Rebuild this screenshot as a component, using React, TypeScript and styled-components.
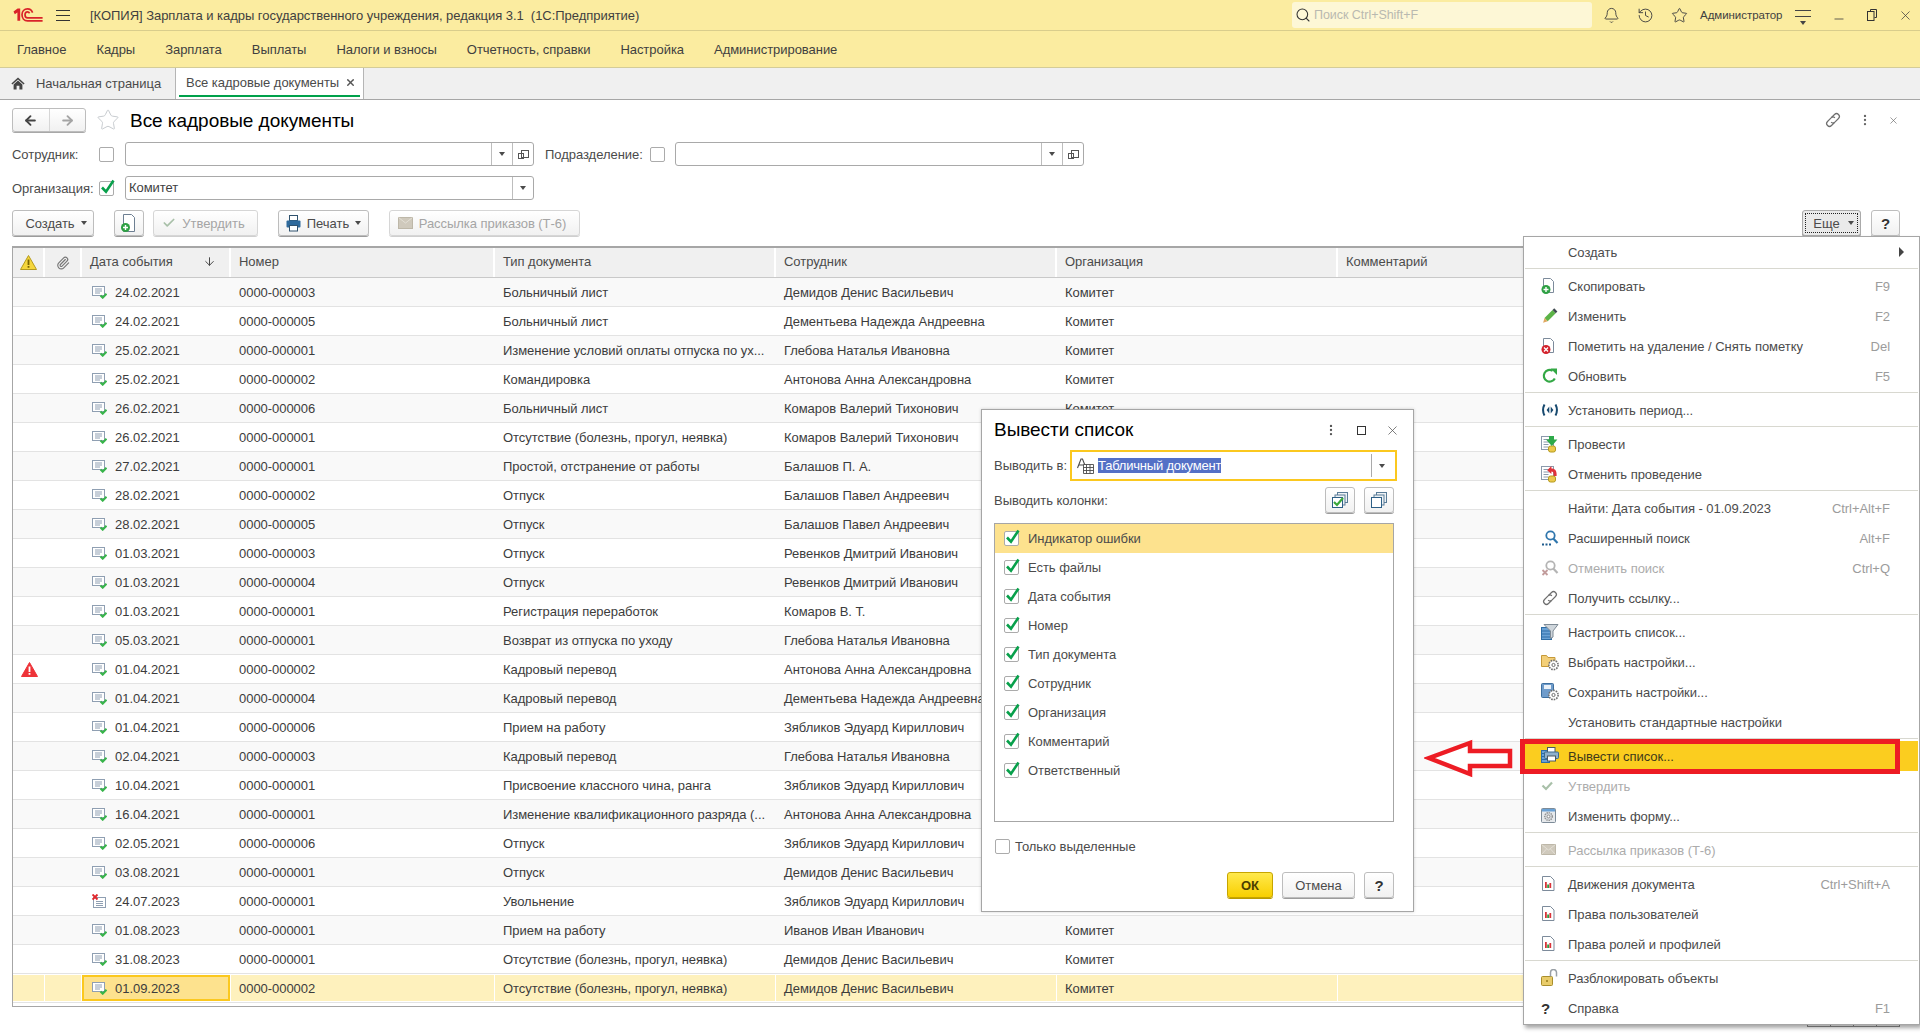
import React from "react";
import styled, { createGlobalStyle } from "styled-components";
import { Bell, History, Star, Search, X, Minus, MoreVertical, ArrowLeft, ArrowRight, ArrowDown, Paperclip, Check } from "lucide-react";

const GlobalStyle = createGlobalStyle`
	html, body {
		margin: 0;
		padding: 0;
		background: #fff;
	}
	body {
		font-family: "Liberation Sans", Arial, sans-serif;
		font-size: 13px;
		letter-spacing: -0.04px;
		color: #4b4b4b;
		overflow: hidden;
	}
	* { box-sizing: border-box; }
`;

/* ---------- data ---------- */

const MENU = ["Главное", "Кадры", "Зарплата", "Выплаты", "Налоги и взносы", "Отчетность, справки", "Настройка", "Администрирование"];

type DocRow = [string, string, string, string, string?];

const DEMIDOV = "Демидов Денис Васильевич";
const DEMENT = "Дементьева Надежда Андреевна";
const GLEBOVA = "Глебова Наталья Ивановна";
const ANTON = "Антонова Анна Александровна";
const KOMAROV = "Комаров Валерий Тихонович";
const BALASH = "Балашов Павел Андреевич";
const REVENK = "Ревенков Дмитрий Иванович";
const ZYAB = "Зябликов Эдуард Кириллович";
const ABSENT = "Отсутствие (болезнь, прогул, неявка)";

const ROWS: DocRow[] = [
	["24.02.2021", "0000-000003", "Больничный лист", DEMIDOV],
	["24.02.2021", "0000-000005", "Больничный лист", DEMENT],
	["25.02.2021", "0000-000001", "Изменение условий оплаты отпуска по ух...", GLEBOVA],
	["25.02.2021", "0000-000002", "Командировка", ANTON],
	["26.02.2021", "0000-000006", "Больничный лист", KOMAROV],
	["26.02.2021", "0000-000001", ABSENT, KOMAROV],
	["27.02.2021", "0000-000001", "Простой, отстранение от работы", "Балашов П. А."],
	["28.02.2021", "0000-000002", "Отпуск", BALASH],
	["28.02.2021", "0000-000005", "Отпуск", BALASH],
	["01.03.2021", "0000-000003", "Отпуск", REVENK],
	["01.03.2021", "0000-000004", "Отпуск", REVENK],
	["01.03.2021", "0000-000001", "Регистрация переработок", "Комаров В. Т."],
	["05.03.2021", "0000-000001", "Возврат из отпуска по уходу", GLEBOVA],
	["01.04.2021", "0000-000002", "Кадровый перевод", ANTON, "warn"],
	["01.04.2021", "0000-000004", "Кадровый перевод", DEMENT],
	["01.04.2021", "0000-000006", "Прием на работу", ZYAB],
	["02.04.2021", "0000-000003", "Кадровый перевод", GLEBOVA],
	["10.04.2021", "0000-000001", "Присвоение классного чина, ранга", ZYAB],
	["16.04.2021", "0000-000001", "Изменение квалификационного разряда (...", ANTON],
	["02.05.2021", "0000-000006", "Отпуск", ZYAB],
	["03.08.2021", "0000-000001", "Отпуск", DEMIDOV],
	["24.07.2023", "0000-000001", "Увольнение", ZYAB, "deleted"],
	["01.08.2023", "0000-000001", "Прием на работу", "Иванов Иван Иванович"],
	["31.08.2023", "0000-000001", ABSENT, DEMIDOV],
	["01.09.2023", "0000-000002", ABSENT, DEMIDOV, "selected"],
];

const COLUMNS = ["Индикатор ошибки", "Есть файлы", "Дата события", "Номер", "Тип документа", "Сотрудник", "Организация", "Комментарий", "Ответственный"];

type MenuEntry = { icon?: string; label: string; key?: string; disabled?: boolean; arrow?: boolean; active?: boolean } | "sep";

const MORE_MENU: MenuEntry[] = [
	{ label: "Создать", arrow: true },
	"sep",
	{ icon: "docAdd", label: "Скопировать", key: "F9" },
	{ icon: "pencil", label: "Изменить", key: "F2" },
	{ icon: "docDel", label: "Пометить на удаление / Снять пометку", key: "Del" },
	{ icon: "refresh", label: "Обновить", key: "F5" },
	"sep",
	{ icon: "period", label: "Установить период..." },
	"sep",
	{ icon: "post", label: "Провести" },
	{ icon: "unpost", label: "Отменить проведение" },
	"sep",
	{ label: "Найти: Дата события - 01.09.2023", key: "Ctrl+Alt+F" },
	{ icon: "find", label: "Расширенный поиск", key: "Alt+F" },
	{ icon: "findOff", label: "Отменить поиск", key: "Ctrl+Q", disabled: true },
	{ icon: "link", label: "Получить ссылку..." },
	"sep",
	{ icon: "funnel", label: "Настроить список..." },
	{ icon: "folderGear", label: "Выбрать настройки..." },
	{ icon: "diskGear", label: "Сохранить настройки..." },
	{ label: "Установить стандартные настройки" },
	"sep",
	{ icon: "printer", label: "Вывести список...", active: true },
	{ icon: "tick", label: "Утвердить", disabled: true },
	{ icon: "formGear", label: "Изменить форму..." },
	"sep",
	{ icon: "mail", label: "Рассылка приказов (Т-6)", disabled: true },
	"sep",
	{ icon: "chart", label: "Движения документа", key: "Ctrl+Shift+A" },
	{ icon: "chart", label: "Права пользователей" },
	{ icon: "chart", label: "Права ролей и профилей" },
	"sep",
	{ icon: "lock", label: "Разблокировать объекты" },
	{ icon: "help", label: "Справка", key: "F1" },
];

/* ---------- drawn icons ---------- */

const Logo = () => (
	<svg width="30" height="15" viewBox="0 0 30 15" fill="none">
		<path d="M0.5 3.6 L4.6 0.6 H7.2 V12.8 H4.4 V4.4 L1.8 6.2Z" fill="#d9232a" />
		<path d="M19.6 4.6 C18.6 2 16.6 0.9 14.6 0.9 C11.2 0.9 9 3.4 9 6.8 C9 10.2 11.2 12.9 14.6 12.9 H29.6" stroke="#d9232a" strokeWidth="1.7" />
		<path d="M16.6 5.2 C16 4.2 15.4 3.8 14.6 3.8 C13 3.8 12 5.1 12 6.8 C12 8.5 13 9.9 14.6 9.9 H29.6" stroke="#d9232a" strokeWidth="1.7" />
	</svg>
);

const HomeIcon = () => (
	<svg width="14" height="13" viewBox="0 0 14 13">
		<path d="M7 0.5 L13.6 6.6 L12.6 7.6 L7 2.6 L1.4 7.6 L0.4 6.6Z" fill="#444" />
		<path d="M2.6 7.4 L7 3.5 L11.4 7.4 V12.6 H8.4 V8.8 H5.6 V12.6 H2.6Z" fill="#444" />
	</svg>
);

const RestoreIcon = () => (
	<svg width="10" height="12" viewBox="0 0 10 12" fill="none" stroke="#333">
		<path d="M3.5 2.5V0.5h6v8h-2" />
		<rect x="0.5" y="2.5" width="6.5" height="9" />
	</svg>
);

const DocStatus = ({ deleted }: { deleted?: boolean }) =>
	deleted ? (
		<svg width="15" height="15" viewBox="0 0 15 15" fill="none">
			<rect x="1.5" y="3.5" width="12" height="10" fill="#fff" stroke="#8f9fb2" />
			<path d="M4 7.5h7M4 9.5h7M4 11.5h7" stroke="#8f9fb2" />
			<path d="M0.5 0.5l5 5M5.5 0.5l-5 5" stroke="#e0262c" strokeWidth="1.9" />
		</svg>
	) : (
		<svg width="15" height="13" viewBox="0 0 15 13" fill="none">
			<rect x="0.5" y="0.5" width="12" height="9" fill="#fff" stroke="#8f9fb2" />
			<path d="M3 3h7M3 5h7M3 7h5" stroke="#8f9fb2" />
			<path d="M8.5 9.5l2.2 2.2 3.8-4" stroke="#38b44a" strokeWidth="2" />
		</svg>
	);

const WarnIcon = ({ color = "#ee3338", mark = "#fff" }: { color?: string; mark?: string }) => (
	<svg width="17" height="15" viewBox="0 0 17 15">
		<path d="M8.5 0.5 L16.5 14.5 H0.5Z" fill={color} stroke={color === "#ee3338" ? color : "#b59a1e"} strokeLinejoin="round" />
		<path d="M7.6 4.5h1.8v5.4H7.6zM7.6 11h1.8v1.8H7.6z" fill={mark} />
	</svg>
);

const GreenCheck = () => (
	<svg width="17" height="16" viewBox="0 0 17 16" fill="none">
		<path d="M3 8.5l4 4.2L14.5 1.5" stroke="#08a04b" strokeWidth="2.6" />
	</svg>
);

const PageGlyph = () => (
	<path d="M2.5 1.5h7l3 3v11h-10z" fill="#fff" stroke="#7d8b9b" />
);

const LinkIcon = () => (
	<svg width="18" height="18" viewBox="0 0 18 18" fill="none" stroke="#6f6f6f" strokeWidth="1.2">
		<path d="M7.5 6.5l3-3a2.7 2.7 0 0 1 4 4l-3.6 3.6a2.7 2.7 0 0 1-3.8 0" />
		<path d="M10.5 11.5l-3 3a2.7 2.7 0 0 1-4-4l3.6-3.6a2.7 2.7 0 0 1 3.8 0" />
	</svg>
);

const MenuGlyph = ({ name }: { name: string }) => {
	const gear = (cx: number, cy: number) => (
		<g>
			<circle cx={cx} cy={cy} r="4.6" fill="#fff" stroke="#6f6f6f" strokeWidth="1.6" strokeDasharray="1.6 1" />
			<circle cx={cx} cy={cy} r="1.6" fill="#fff" stroke="#6f6f6f" />
		</g>
	);
	switch (name) {
		case "docAdd":
			return (
				<svg width="18" height="18" viewBox="0 0 18 18" fill="none">
					<PageGlyph />
					<circle cx="5" cy="12.5" r="4.5" fill="#2ea043" />
					<path d="M5 10v5M2.5 12.5h5" stroke="#fff" strokeWidth="1.4" />
				</svg>
			);
		case "pencil":
			return (
				<svg width="18" height="18" viewBox="0 0 18 18" fill="none">
					<path d="M3.5 11l8-8 3.2 3.2-8 8z" fill="#5cb347" />
					<path d="M11.5 3l1.7-1.7 3.2 3.2-1.7 1.7z" fill="#3f4a4f" />
					<path d="M3.5 11l3.2 3.2-4.6 1.6z" fill="#e0a860" />
				</svg>
			);
		case "docDel":
			return (
				<svg width="18" height="18" viewBox="0 0 18 18" fill="none">
					<PageGlyph />
					<circle cx="5" cy="12.5" r="4.5" fill="#d3222c" />
					<path d="M3 10.5l4 4M7 10.5l-4 4" stroke="#fff" strokeWidth="1.3" />
				</svg>
			);
		case "refresh":
			return (
				<svg width="18" height="18" viewBox="0 0 18 18" fill="none">
					<path d="M13.8 11.4A5.8 5.8 0 1 1 11.6 3.8" stroke="#33a845" strokeWidth="2.2" />
					<path d="M9.6 1.6h6.4v6.4z" fill="#33a845" />
				</svg>
			);
		case "period":
			return (
				<svg width="18" height="18" viewBox="0 0 18 18" fill="none">
					<path d="M3.5 3.5Q0.6 9 3.5 14.5M14.5 3.5Q17.4 9 14.5 14.5" stroke="#17496f" strokeWidth="2" />
					<path d="M8.3 5.5v7L5.6 9zM9.7 5.5v7L12.4 9z" fill="#17496f" />
				</svg>
			);
		case "post":
		case "unpost":
			return (
				<svg width="18" height="18" viewBox="0 0 18 18" fill="none">
					<rect x="0.5" y="1.5" width="12" height="13" fill="#fff" stroke="#8b9aac" />
					<path d="M2.5 4.5h8M2.5 7h6M2.5 9.5h5M2.5 12h5" stroke="#8b9aac" />
					<rect x="7.5" y="11" width="7" height="6" rx="2" fill="#ecc94b" stroke="#b59a1e" />
					{name === "post" ? (
						<path d="M8 1h5v3.4h3.4L10.8 11 5 4.4h3z" fill="#2eaa4a" />
					) : (
						<path d="M6.2 5.2 L10.4 1v2.6c3 0 5.2 1.8 5.2 5.4v2h-3v-2c0-1.6-1-2.4-2.2-2.4v2.4z" fill="#e0333a" />
					)}
				</svg>
			);
		case "find":
		case "findOff": {
			const c = name === "find" ? "#2f76ad" : "#b4b4b4";
			return (
				<svg width="18" height="18" viewBox="0 0 18 18" fill="none">
					<circle cx="9.5" cy="6.5" r="4.2" stroke={c} strokeWidth="1.8" fill="#fff" />
					<path d="M12.5 9.8l4 4.2" stroke={c} strokeWidth="2.2" />
					{name === "find" ? (
						<path d="M1 15.5h2M4.5 15.5h2M8 15.5h2" stroke="#1f5c8e" strokeWidth="2" />
					) : (
						<path d="M1.5 11l5 5M6.5 11l-5 5" stroke="#c29c9c" strokeWidth="1.8" />
					)}
				</svg>
			);
		}
		case "link":
			return <LinkIcon />;
		case "funnel":
			return (
				<svg width="18" height="18" viewBox="0 0 18 18" fill="none">
					<rect x="0.5" y="4.5" width="10" height="12" fill="#6aa2d6" stroke="#2d6da6" />
					<path d="M1 8h9M1 11h9M1 14h9" stroke="#2d6da6" />
					<path d="M3 1.5h14l-5 6.5v6l-2.5 1.5V8z" fill="#cfd6dc" stroke="#7f8b96" />
				</svg>
			);
		case "folderGear":
			return (
				<svg width="18" height="18" viewBox="0 0 18 18" fill="none">
					<path d="M0.5 2.5h5l1.5 2h7v9h-13.5z" fill="#f3cf78" stroke="#c69a3a" />
					{gear(12.5, 12)}
				</svg>
			);
		case "diskGear":
			return (
				<svg width="18" height="18" viewBox="0 0 18 18" fill="none">
					<rect x="0.5" y="0.5" width="12" height="14" rx="1" fill="#6f9ccb" stroke="#3d6f9f" />
					<rect x="3" y="2" width="7" height="4" fill="#eaf1f8" />
					{gear(12.5, 12)}
				</svg>
			);
		case "printer":
			return (
				<svg width="18" height="18" viewBox="0 0 18 18" fill="none">
					<rect x="0.5" y="3.5" width="8" height="12" fill="#6aa2d6" stroke="#2d6da6" />
					<path d="M1 6.5h7M1 9.5h7M1 12.5h7" stroke="#2d6da6" />
					<rect x="6.5" y="0.5" width="7.5" height="5" fill="#fff" stroke="#4a5863" />
					<rect x="3.5" y="5" width="14" height="6.5" rx="1" fill="#8eb0cc" stroke="#3f6a8c" />
					<rect x="6.5" y="9" width="8" height="5" fill="#fff" stroke="#4a5863" />
				</svg>
			);
		case "tick":
			return (
				<svg width="18" height="18" viewBox="0 0 18 18" fill="none">
					<path d="M1.5 8.5l3.5 3.5 6-6.5" stroke="#a9c0a9" strokeWidth="2.2" />
				</svg>
			);
		case "formGear":
			return (
				<svg width="18" height="18" viewBox="0 0 18 18" fill="none">
					<rect x="0.5" y="1.5" width="14" height="14" rx="1" fill="#e6e9ec" stroke="#7d8b98" />
					<rect x="1" y="2" width="13" height="2.5" fill="#6aa2d6" />
					<circle cx="7.5" cy="9.5" r="3.8" fill="#d4d8dc" stroke="#8e8e8e" strokeWidth="1.3" strokeDasharray="1.4 .8" />
					<circle cx="7.5" cy="9.5" r="1.4" fill="#fff" stroke="#8e8e8e" />
				</svg>
			);
		case "mail":
			return (
				<svg width="18" height="18" viewBox="0 0 18 18" fill="none">
					<rect x="0.5" y="3.5" width="14" height="10" fill="#cfc9bc" stroke="#bdb7a8" />
					<path d="M0.5 3.5l7 5.5 7-5.5M0.5 13.5l5-5.5M14.5 13.5l-5-5.5" stroke="#e3dfd5" />
				</svg>
			);
		case "chart":
			return (
				<svg width="18" height="18" viewBox="0 0 18 18" fill="none">
					<path d="M1.5 1.5h8l3.5 3.5v10.500h-11.500z" fill="#fff" stroke="#7d8b9b" />
					<rect x="4" y="7" width="1.800" height="6" fill="#d9333a" />
					<rect x="6.200" y="9.500" width="1.800" height="3.500" fill="#2ea043" />
					<rect x="8.400" y="8" width="1.800" height="5" fill="#d9333a" />
				</svg>
			);
		case "lock":
			return (
				<svg width="18" height="18" viewBox="0 0 18 18" fill="none">
					<rect x="0.5" y="7.5" width="11" height="9" rx="1" fill="#e9cc6a" stroke="#a98e2c" />
					<rect x="5" y="11" width="2" height="2" fill="#a98e2c" />
					<path d="M9.5 7.5V3.5a3 3 0 0 1 6 0v4" stroke="#9aa0a6" strokeWidth="1.5" />
				</svg>
			);
		case "help":
			return <HelpGlyph>?</HelpGlyph>;
		default:
			return null;
	}
};

const AddDocIcon = () => (
	<svg width="16" height="22" viewBox="0 0 16 22" fill="none">
		<path d="M2.5 2.5h8l3 3v14h-11z" fill="#fff" stroke="#6d7f92" />
		<circle cx="4.5" cy="15.5" r="4.5" fill="#2ea043" />
		<path d="M4.5 13v5M2 15.5h5" stroke="#fff" strokeWidth="1.4" />
	</svg>
);

const PrinterIcon = () => (
	<svg width="15" height="17" viewBox="0 0 15 17" fill="none">
		<rect x="3.5" y="0.5" width="8" height="5" fill="#fff" stroke="#30526e" />
		<rect x="0.5" y="5.5" width="14" height="7" rx="1" fill="#2f6a9c" />
		<rect x="3.5" y="10.5" width="8" height="5.5" fill="#fff" stroke="#30526e" />
	</svg>
);

const MailIcon = () => (
	<svg width="15" height="12" viewBox="0 0 15 12" fill="none">
		<rect x="0.5" y="0.5" width="14" height="11" fill="#cfc9bc" stroke="#bdb7a8" />
		<path d="M0.5 0.5l7 5.5 7-5.5" stroke="#e3dfd5" />
	</svg>
);

const SpreadsheetIcon = () => (
	<svg width="17" height="16" viewBox="0 0 17 16" fill="none">
		<path d="M0.5 10L4 1h1.5L9 10M2 7h5" stroke="#4b4b4b" strokeWidth="1.1" />
		<path d="M6.5 6.5h10v9h-10zM6.5 9.5h10M6.5 12.5h10M9.5 6.5v9M13 6.5v9" stroke="#4b4b4b" strokeWidth=".9" fill="#fff" />
	</svg>
);

const CheckAllIcon = ({ checked }: { checked?: boolean }) => (
	<svg width="16" height="16" viewBox="0 0 16 16" fill="none">
		<rect x="5.5" y="0.5" width="10" height="10" fill="#eef2f5" stroke="#5a7c98" />
		<rect x="3" y="3" width="10" height="10" fill="#eef2f5" stroke="#5a7c98" />
		<rect x="0.5" y="5.5" width="10" height="10" fill="#fff" stroke="#2d5f86" />
		{checked && <path d="M2 10l3 3 6-7" stroke="#3aa83a" strokeWidth="2.2" />}
	</svg>
);

/* ---------- window chrome ---------- */

const Page = styled.div`
	position: relative;
	width: 1920px;
	height: 1035px;
	overflow: hidden;
	display: flex;
	flex-direction: column;
`;

const TitleBar = styled.div`
	height: 31px;
	background: #fbeca0;
	border-bottom: 1px solid #d9cd8c;
	display: flex;
	align-items: center;
	color: #3f3f3f;
	flex: none;
`;

const LogoBox = styled.div`
	margin-left: 13px;
	width: 43px;
	display: flex;
`;

const Burger = styled.div`
	width: 14px;
	height: 11px;
	border-top: 1px solid #333;
	border-bottom: 1px solid #333;
	position: relative;
	margin-right: 20px;
	&::after {
		content: "";
		position: absolute;
		left: 0;
		right: 0;
		top: 4px;
		height: 1px;
		background: #333;
	}
`;

const WindowTitle = styled.div`
	white-space: pre;
	width: 1202px;
	flex: none;
`;

const SearchBox = styled.div`
	width: 300px;
	height: 26px;
	background: #fdf7d6;
	border-radius: 3px;
	display: flex;
	align-items: center;
	gap: 3px;
	padding-left: 3px;
	color: #b9b9b0;
	font-size: 12.5px;
	flex: none;
`;

const TitleTools = styled.div`
	display: flex;
	align-items: center;
	margin-left: 2px;
	flex: 1;
	color: #3f3f3f;
`;

const ToolSlot = styled.div<{ $w: number; $gap?: number }>`
	width: ${({ $w }) => $w}px;
	margin-left: ${({ $gap = 0 }) => $gap}px;
	display: flex;
	justify-content: center;
	align-items: center;
	flex: none;
`;

const UserName = styled.div`
	font-size: 11.5px;
	width: 90px;
	flex: none;
	margin-left: 4px;
`;

const SectionLines = styled.div`
	width: 16px;
	height: 11px;
	border-top: 1px solid #444;
	position: relative;
	margin: 0 20px 0 5px;
	flex: none;
	&::before {
		content: "";
		position: absolute;
		left: 0;
		right: 0;
		top: 5px;
		height: 1px;
		background: #444;
	}
	&::after {
		content: "";
		position: absolute;
		left: 5px;
		top: 10px;
		border: 3px solid transparent;
		border-top: 4px solid #444;
	}
`;

const MenuBar = styled.div`
	height: 37px;
	background: #fbeca0;
	border-bottom: 1px solid #d4cc98;
	display: flex;
	align-items: center;
	padding-left: 17px;
	gap: 30px;
	color: #3f3f3f;
	flex: none;
`;

const TabStrip = styled.div`
	height: 32px;
	background: #f0f0f0;
	border-bottom: 1px solid #a6a6a6;
	display: flex;
	flex: none;
`;

const HomeTab = styled.div`
	width: 175px;
	display: flex;
	align-items: center;
	gap: 11px;
	padding-left: 11px;
`;

const ActiveTab = styled.div`
	width: 189px;
	height: 31px;
	background: #fff;
	border-left: 1px solid #b5b5b5;
	border-right: 1px solid #b5b5b5;
	padding: 0 3px;
	flex: none;
`;

const ActiveTabInner = styled.div`
	height: 29px;
	border-bottom: 2px solid #00a14b;
	display: flex;
	align-items: center;
	justify-content: space-between;
	padding: 2px 4px 0 7px;
`;

/* ---------- form ---------- */

const Content = styled.div`
	flex: 1;
	display: flex;
	flex-direction: column;
	padding: 8px 0 0 12px;
	min-height: 0;
`;

const HeadRow = styled.div`
	height: 24px;
	display: flex;
	align-items: center;
	flex: none;
`;

const NavGroup = styled.div`
	width: 74px;
	height: 24px;
	border: 1px solid #bdbdbd;
	border-radius: 3px;
	background: linear-gradient(#fff, #f1f1f1);
	box-shadow: 0 1px 0 #a8a8a8;
	display: flex;
	flex: none;
`;

const NavPart = styled.div<{ $last?: boolean }>`
	flex: 1;
	display: flex;
	align-items: center;
	justify-content: center;
	border-left: ${({ $last }) => ($last ? "1px solid #d6d6d6" : "none")};
`;

const FormTitle = styled.div`
	font-size: 19px;
	color: #000;
	margin-left: 10px;
	padding-top: 2px;
`;

const HeadTools = styled.div`
	margin-left: auto;
	display: flex;
	align-items: center;
	gap: 16px;
	padding-right: 21px;
	color: #666;
`;

const FilterRow = styled.div`
	height: 24px;
	margin-top: 10px;
	display: flex;
	align-items: center;
	flex: none;
`;

const Label = styled.div<{ $w: number }>`
	width: ${({ $w }) => $w}px;
	flex: none;
	white-space: nowrap;
`;

const CheckBox = styled.div<{ $gap?: number; $left?: number }>`
	width: 15px;
	height: 15px;
	border: 1px solid #ababab;
	border-radius: 2px;
	background: #fff;
	margin-left: ${({ $left = 0 }) => $left}px;
	margin-right: ${({ $gap = 11 }) => $gap}px;
	flex: none;
	position: relative;
	svg {
		position: absolute;
		left: -1px;
		top: -3px;
	}
`;

const Field = styled.div<{ $gap?: number }>`
	width: 409px;
	height: 24px;
	border: 1px solid #a9a9a9;
	border-radius: 3px;
	background: #fff;
	display: flex;
	margin-right: ${({ $gap = 0 }) => $gap}px;
	flex: none;
`;

const FieldText = styled.div`
	flex: 1;
	padding-left: 3px;
	line-height: 22px;
	color: #3f3f3f;
`;

const FieldButton = styled.div`
	width: 21px;
	border-left: 1px solid #bdbdbd;
	display: flex;
	align-items: center;
	justify-content: center;
`;

const Caret = styled.div`
	width: 0;
	height: 0;
	border: 3px solid transparent;
	border-top: 4px solid #4b4b4b;
	margin-top: 3px;
	flex: none;
`;

const OpenGlyph = styled.div`
	width: 6px;
	height: 6px;
	border: 1px solid #555;
	position: relative;
	top: 2px;
	left: -2px;
	background: #fff;
	&::before {
		content: "";
		position: absolute;
		left: 2px;
		top: -4px;
		width: 6px;
		height: 6px;
		border: 1px solid #555;
		z-index: 0;
	}
`;

const Toolbar = styled.div`
	height: 26px;
	margin-top: 10px;
	padding-right: 20px;
	display: flex;
	align-items: stretch;
	flex: none;
`;

const Button = styled.div<{ $w: number; $gap?: number; $disabled?: boolean; $primary?: boolean; $padL?: number; $padR?: number }>`
	width: ${({ $w }) => $w}px;
	margin-right: ${({ $gap = 0 }) => $gap}px;
	padding: 0 ${({ $padR = 0 }) => $padR}px 0 ${({ $padL = 0 }) => $padL}px;
	flex: none;
	border: 1px solid ${({ $disabled, $primary }) => ($primary ? "#c7a500" : $disabled ? "#d6d6d6" : "#bdbdbd")};
	border-radius: 3px;
	background: ${({ $primary }) => ($primary ? "linear-gradient(#ffe94d, #f8cf00)" : "linear-gradient(#fff, #f1f1f1)")};
	box-shadow: 0 1px 0 ${({ $disabled, $primary }) => ($primary ? "#b99a00" : $disabled ? "#cfcfcf" : "#9c9c9c")};
	color: ${({ $disabled, $primary }) => ($primary ? "#4a4000" : $disabled ? "#a5a5a5" : "#4b4b4b")};
	font-weight: ${({ $primary }) => ($primary ? 700 : 400)};
	display: flex;
	align-items: center;
	justify-content: center;
	gap: 6px;
	white-space: nowrap;
`;

const MoreButton = styled(Button)`
	background: #eaeaea;
	margin-left: auto;
	position: relative;
	border-color: #aaa;
	gap: 8px;
	&::after {
		content: "";
		position: absolute;
		inset: 2px;
		border: 1px dotted #222;
	}
`;

const HelpGlyph = styled.span`
	font-size: 15px;
	font-weight: 700;
	color: #333;
`;

/* ---------- table ---------- */

const Table = styled.div`
	margin-top: 10px;
	border: 1px solid #a6a6a6;
	border-right: none;
	border-top-width: 2px;
	padding-bottom: 3px;
	flex: none;
`;

const tableGrid = "32px 37px 149px 264px 281px 281px 281px 1fr";

const HeaderRow = styled.div`
	height: 30px;
	display: grid;
	grid-template-columns: ${tableGrid};
	border-bottom: 1px solid #c9c9c9;
`;

const HeaderCell = styled.div<{ $center?: boolean }>`
	background: #f0f0f0;
	border-right: 2px solid #fff;
	display: flex;
	align-items: center;
	justify-content: ${({ $center }) => ($center ? "center" : "space-between")};
	padding: ${({ $center }) => ($center ? "0" : "0 13px 2px 8px")};
`;

const Row = styled.div<{ $odd: boolean; $selected?: boolean }>`
	height: 29px;
	display: grid;
	grid-template-columns: ${tableGrid};
	background: ${({ $odd, $selected }) => ($selected ? "#fff" : $odd ? "#f9f9f9" : "#fff")};
	border-bottom: 1px solid #e3e3e3;
	padding: ${({ $selected }) => ($selected ? "1px 0" : "0")};
	color: #3c3c3c;
`;

const Cell = styled.div<{ $selected?: boolean; $focused?: boolean; $center?: boolean; $pad?: number }>`
	display: flex;
	align-items: center;
	justify-content: ${({ $center }) => ($center ? "center" : "flex-start")};
	padding-left: ${({ $center, $focused, $pad = 8 }) => ($center ? 0 : $focused ? $pad - 2 : $pad)}px;
	white-space: nowrap;
	overflow: hidden;
	gap: 8px;
	background: ${({ $selected, $focused }) => ($focused ? "#fde28e" : $selected ? "#fef1bd" : "transparent")};
	border: ${({ $focused }) => ($focused ? "2px solid #fbc81f" : "none")};
	border-right: ${({ $focused, $selected }) => ($focused ? "2px solid #fbc81f" : $selected ? "1px solid #fff" : "none")};
	margin-right: ${({ $focused }) => ($focused ? "1px" : "0")};
`;

const IconSlot = styled.div`
	width: 15px;
	height: 15px;
	display: flex;
	align-items: center;
	flex: none;
`;

const Pager = styled.div`
	margin-top: 1px;
	padding-right: 20px;
	display: flex;
	justify-content: flex-end;
`;

const PagerButton = styled.div`
	width: 24px;
	height: 19px;
	border: 1px solid #8f8f8f;
	margin-left: -1px;
`;

/* ---------- dialog ---------- */

const Dialog = styled.div`
	position: absolute;
	left: 981px;
	top: 409px;
	width: 433px;
	height: 503px;
	background: #fff;
	border: 1px solid #a6a6a6;
	box-shadow: 0 0 3px rgba(0, 0, 0, 0.18);
	padding: 0 19px 0 12px;
	display: flex;
	flex-direction: column;
`;

const DialogHead = styled.div`
	height: 40px;
	display: flex;
	align-items: center;
	font-size: 19px;
	color: #000;
	flex: none;
`;

const DialogTools = styled.div`
	margin-left: auto;
	display: flex;
	align-items: center;
	gap: 19px;
	margin-right: -6px;
	color: #555;
`;

const MaxGlyph = styled.div`
	width: 9px;
	height: 9px;
	border: 1px solid #333;
`;

const OutputRow = styled.div`
	display: flex;
	align-items: center;
	height: 31px;
	flex: none;
`;

const OutputField = styled.div`
	width: 327px;
	height: 31px;
	border: 2px solid #fbc81f;
	margin-right: -17px;
	display: flex;
	align-items: center;
	padding-left: 5px;
	flex: none;
`;

const SelectedText = styled.span`
	background: #5470c6;
	color: #fff;
	margin-left: 4px;
	line-height: 15px;
	letter-spacing: -0.2px;
`;

const OutputDrop = styled.div`
	margin-left: auto;
	width: 23px;
	height: 23px;
	border-left: 1px solid #aaa;
	display: flex;
	align-items: center;
	justify-content: center;
	padding-right: 2px;
	margin-right: 1px;
	flex: none;
`;

const ColumnsHead = styled.div`
	height: 26px;
	margin-top: 6px;
	display: flex;
	align-items: center;
	justify-content: space-between;
	flex: none;
`;

const ColumnsTools = styled.div`
	display: flex;
	height: 26px;
`;

const IconButton = styled(Button)`
	height: 26px;
`;

const ColumnList = styled.div`
	margin-top: 10px;
	height: 299px;
	border: 1px solid #a6a6a6;
	flex: none;
`;

const ColumnRow = styled.div<{ $active?: boolean }>`
	height: 29px;
	display: flex;
	align-items: center;
	padding-left: 9px;
	background: ${({ $active }) => ($active ? "#fde28e" : "transparent")};
	color: #4b4b4b;
`;

const OnlySelected = styled.div`
	margin-top: 16px;
	display: flex;
	align-items: center;
	height: 16px;
	flex: none;
`;

const DialogButtons = styled.div`
	margin-top: 18px;
	height: 26px;
	display: flex;
	justify-content: flex-end;
	flex: none;
`;

/* ---------- dropdown ---------- */

const Dropdown = styled.div`
	position: absolute;
	left: 1523px;
	top: 236px;
	width: 397px;
	height: 789px;
	background: #fff;
	border: 1px solid #a6a6a6;
	box-shadow: 2px 3px 4px rgba(0, 0, 0, 0.35);
	padding: 0 1px;
`;

const MenuItem = styled.div<{ $active?: boolean; $disabled?: boolean }>`
	height: 30px;
	display: flex;
	align-items: center;
	background: ${({ $active }) => ($active ? "#fbcd1f" : "transparent")};
	color: ${({ $disabled, $active }) => ($active ? "#3f3a1a" : $disabled ? "#acacac" : "#4b4b4b")};
	padding-right: 28px;
	position: relative;
	white-space: nowrap;
`;

const MenuIcon = styled.div`
	width: 43px;
	padding-left: 16px;
	display: flex;
	align-items: center;
	height: 18px;
	flex: none;
`;

const MenuKey = styled.div`
	margin-left: auto;
	color: #9c9c9c;
`;

const MenuArrow = styled.div`
	position: absolute;
	right: 14px;
	top: 10px;
	border: 5px solid transparent;
	border-left: 5px solid #444;
	border-right: none;
`;

const MenuSeparator = styled.div`
	height: 4px;
	padding-top: 1px;
	&::after {
		content: "";
		display: block;
		height: 1px;
		background: #d8d8d0;
	}
`;

const Highlight = styled.div`
	position: absolute;
	left: 1520px;
	top: 739px;
	width: 380px;
	height: 35px;
	border: 5px solid #ed1c24;
`;

const PointerArrow = styled.svg`
	position: absolute;
	left: 1424px;
	top: 739px;
`;

/* ---------- page ---------- */

export default function App() {
	return (
		<Page>
			<GlobalStyle />
			<TitleBar>
				<LogoBox><Logo /></LogoBox>
				<Burger />
				<WindowTitle>[КОПИЯ] Зарплата и кадры государственного учреждения, редакция 3.1  (1С:Предприятие)</WindowTitle>
				<SearchBox>
					<Search size={16} color="#333" strokeWidth={1.6} />
					Поиск Ctrl+Shift+F
				</SearchBox>
				<TitleTools>
					<ToolSlot $w={34}><Bell size={17} strokeWidth={1.3} /></ToolSlot>
					<ToolSlot $w={34}><History size={17} strokeWidth={1.3} /></ToolSlot>
					<ToolSlot $w={34}><Star size={17} strokeWidth={1.3} /></ToolSlot>
					<UserName>Администратор</UserName>
					<SectionLines />
					<ToolSlot $w={16}><Minus size={14} strokeWidth={1.4} style={{ marginTop: 8 }} /></ToolSlot>
					<ToolSlot $w={50}><RestoreIcon /></ToolSlot>
					<ToolSlot $w={16}><X size={15} strokeWidth={1.2} /></ToolSlot>
				</TitleTools>
			</TitleBar>
			<MenuBar>
				{MENU.map((item) => <span key={item}>{item}</span>)}
			</MenuBar>
			<TabStrip>
				<HomeTab>
					<HomeIcon />
					Начальная страница
				</HomeTab>
				<ActiveTab>
					<ActiveTabInner>
						Все кадровые документы
						<X size={11} strokeWidth={3} color="#555" />
					</ActiveTabInner>
				</ActiveTab>
			</TabStrip>
			<Content>
				<HeadRow>
					<NavGroup>
						<NavPart><ArrowLeft size={15} strokeWidth={3} color="#444" /></NavPart>
						<NavPart $last><ArrowRight size={15} strokeWidth={3} color="#a4a4a4" /></NavPart>
					</NavGroup>
					<ToolSlot $w={24} $gap={10}><Star size={24} strokeWidth={1} color="#c8ccd0" /></ToolSlot>
					<FormTitle>Все кадровые документы</FormTitle>
					<HeadTools>
						<LinkIcon />
						<MoreVertical size={14} strokeWidth={2} />
						<X size={11} strokeWidth={1.4} />
					</HeadTools>
				</HeadRow>
				<FilterRow>
					<Label $w={87}>Сотрудник:</Label>
					<CheckBox />
					<Field $gap={11}>
						<FieldText />
						<FieldButton><Caret /></FieldButton>
						<FieldButton><OpenGlyph /></FieldButton>
					</Field>
					<Label $w={105}>Подразделение:</Label>
					<CheckBox $gap={10} />
					<Field>
						<FieldText />
						<FieldButton><Caret /></FieldButton>
						<FieldButton><OpenGlyph /></FieldButton>
					</Field>
				</FilterRow>
				<FilterRow>
					<Label $w={87}>Организация:</Label>
					<CheckBox><GreenCheck /></CheckBox>
					<Field>
						<FieldText>Комитет</FieldText>
						<FieldButton><Caret /></FieldButton>
					</Field>
				</FilterRow>
				<Toolbar>
					<Button $w={82} $gap={20} $padL={6}>Создать <Caret /></Button>
					<Button $w={30} $gap={9}><AddDocIcon /></Button>
					<Button $w={105} $gap={20} $disabled $padR={4}><Check size={14} strokeWidth={3} color="#a9c0a9" /> Утвердить</Button>
					<Button $w={91} $gap={20}><PrinterIcon /> Печать <Caret /></Button>
					<Button $w={191} $disabled $padR={5}><MailIcon /> Рассылка приказов (Т-6)</Button>
					<MoreButton $w={59} $gap={10} $padL={4}>Еще <Caret /></MoreButton>
					<Button $w={29}><HelpGlyph>?</HelpGlyph></Button>
				</Toolbar>
				<Table>
					<HeaderRow>
						<HeaderCell $center><WarnIcon color="#f5d63d" mark="#7a6500" /></HeaderCell>
						<HeaderCell $center><Paperclip size={14} color="#777" /></HeaderCell>
						<HeaderCell>Дата события <ArrowDown size={13} strokeWidth={1.8} color="#444" /></HeaderCell>
						<HeaderCell>Номер</HeaderCell>
						<HeaderCell>Тип документа</HeaderCell>
						<HeaderCell>Сотрудник</HeaderCell>
						<HeaderCell>Организация</HeaderCell>
						<HeaderCell>Комментарий</HeaderCell>
					</HeaderRow>
					{ROWS.map(([date, num, type, person, flag], i) => {
						const selected = flag === "selected";
						return (
							<Row key={i} $odd={i % 2 === 0} $selected={selected}>
								<Cell $center $selected={selected}>{flag === "warn" && <WarnIcon />}</Cell>
								<Cell $selected={selected} />
								<Cell $selected={selected} $focused={selected} $pad={10}>
									<IconSlot><DocStatus deleted={flag === "deleted"} /></IconSlot>
									{date}
								</Cell>
								<Cell $selected={selected}>{num}</Cell>
								<Cell $selected={selected}>{type}</Cell>
								<Cell $selected={selected}>{person}</Cell>
								<Cell $selected={selected}>Комитет</Cell>
								<Cell $selected={selected} />
							</Row>
						);
					})}
				</Table>
				<Pager>
					<PagerButton /><PagerButton /><PagerButton /><PagerButton />
				</Pager>
			</Content>

			<Dialog>
				<DialogHead>
					Вывести список
					<DialogTools>
						<MoreVertical size={14} strokeWidth={2} />
						<MaxGlyph />
						<X size={15} strokeWidth={1.2} />
					</DialogTools>
				</DialogHead>
				<OutputRow>
					<Label $w={76}>Выводить в:</Label>
					<OutputField>
						<SpreadsheetIcon />
						<SelectedText>Табличный документ</SelectedText>
						<OutputDrop><Caret /></OutputDrop>
					</OutputField>
				</OutputRow>
				<ColumnsHead>
					Выводить колонки:
					<ColumnsTools>
						<IconButton $w={30} $gap={9}><CheckAllIcon checked /></IconButton>
						<IconButton $w={30}><CheckAllIcon /></IconButton>
					</ColumnsTools>
				</ColumnsHead>
				<ColumnList>
					{COLUMNS.map((col, i) => (
						<ColumnRow key={col} $active={i === 0}>
							<CheckBox $gap={9}><GreenCheck /></CheckBox>
							{col}
						</ColumnRow>
					))}
				</ColumnList>
				<OnlySelected>
					<CheckBox $gap={5} $left={1} />
					Только выделенные
				</OnlySelected>
				<DialogButtons>
					<Button $w={46} $gap={9} $primary>ОК</Button>
					<Button $w={73} $gap={9}>Отмена</Button>
					<Button $w={30}><HelpGlyph>?</HelpGlyph></Button>
				</DialogButtons>
			</Dialog>

			<Dropdown>
				{MORE_MENU.map((entry, i) =>
					entry === "sep" ? (
						<MenuSeparator key={i} />
					) : (
						<MenuItem key={i} $active={entry.active} $disabled={entry.disabled}>
							<MenuIcon>{entry.icon && <MenuGlyph name={entry.icon} />}</MenuIcon>
							{entry.label}
							{entry.key && <MenuKey>{entry.key}</MenuKey>}
							{entry.arrow && <MenuArrow />}
						</MenuItem>
					)
				)}
			</Dropdown>
			<Highlight />
			<PointerArrow width="90" height="40" viewBox="0 0 90 40" fill="none">
				<path d="M5 19 L46 4 V12 H86 V27 H46 V35Z" fill="#fff" stroke="#ed1c24" strokeWidth="4.5" />
			</PointerArrow>
		</Page>
	);
}
